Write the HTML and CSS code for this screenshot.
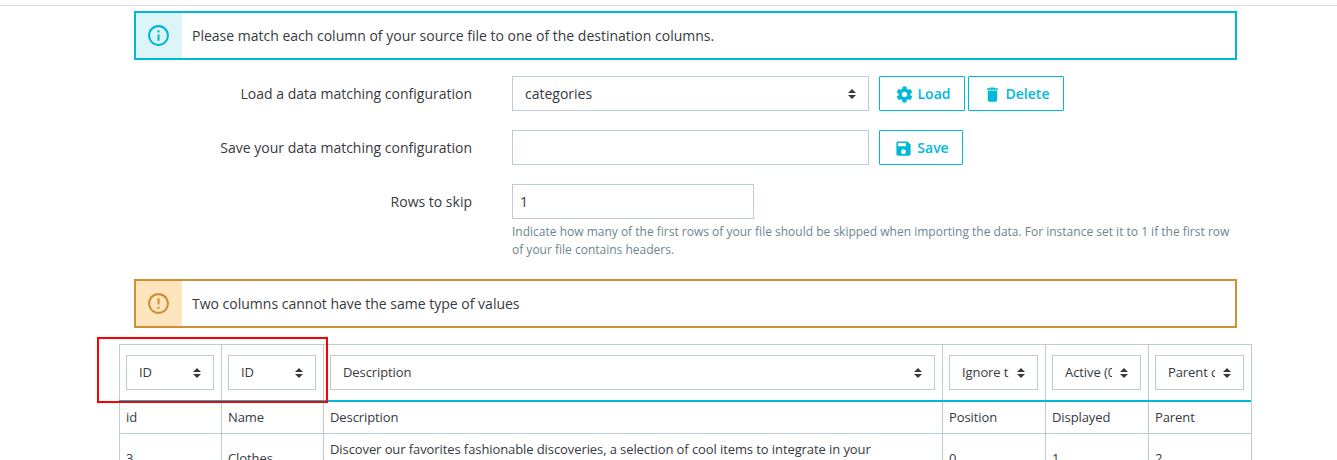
FILE: index.html
```html
<!DOCTYPE html>
<html lang="en">
<head>
<meta charset="utf-8">
<title>Import matching</title>
<link rel="stylesheet" href="styles.css">
</head>
<body>
<svg class="defs" width="0" height="0">
  <symbol id="sort" viewBox="0 0 8 10"><path d="M4 0L8 4H0zM0 6h8L4 10z"/></symbol>
</svg>
<main class="page">
  <div class="alert info">
    <div class="alert-icon"><svg viewBox="0 0 24 24"><path d="M11 17h2v-6h-2v6zm1-15C6.480 2 2 6.480 2 12s4.480 10 10 10 10-4.480 10-10S17.520 2 12 2zm0 18c-4.410 0-8-3.590-8-8s3.590-8 8-8 8 3.590 8 8-3.590 8-8 8zM11 9h2V7h-2v2z"/></svg></div>
    <p class="alert-text">Please match each column of your source file to one of the destination columns.</p>
  </div>
  <form class="form">
    <div class="row">
      <label class="label">Load a data matching configuration</label>
      <div class="select wide"><span class="value">categories</span><svg class="arrows"><use href="#sort"/></svg></div>
      <div class="actions">
        <button class="btn load" type="button"><svg viewBox="0 0 24 24"><path d="M19.430 12.980c.04-.32.070-.64.070-.98s-.03-.66-.07-.98l2.110-1.650c.19-.15.240-.42.120-.64l-2-3.460c-.12-.22-.39-.3-.61-.22l-2.490 1c-.52-.4-1.080-.73-1.690-.98l-.38-2.650C14.460 2.180 14.250 2 14 2h-4c-.25 0-.46.180-.49.420l-.38 2.650c-.61.250-1.170.59-1.690.98l-2.490-1c-.23-.09-.49 0-.61.220l-2 3.460c-.13.220-.07.49.120.64l2.110 1.650c-.04.320-.07.650-.07.980s.03.660.070.980l-2.110 1.650c-.19.150-.24.420-.12.640l2 3.460c.120.220.39.300.61.220l2.490-1c.52.400 1.080.730 1.690.980l.38 2.650c.03.240.240.420.490.420h4c.25 0 .46-.18.490-.42l.38-2.650c.61-.25 1.170-.59 1.690-.98l2.490 1c.230.090.490 0 .61-.22l2-3.460c.12-.22.070-.49-.12-.64l-2.110-1.650zM12 15.500c-1.930 0-3.500-1.570-3.500-3.500s1.570-3.500 3.500-3.500 3.500 1.570 3.500 3.500-1.570 3.500-3.500 3.500z"/></svg>Load</button>
        <button class="btn delete" type="button"><svg viewBox="0 0 24 24"><path d="M6 19c0 1.100.9 2 2 2h8c1.100 0 2-.9 2-2V7H6v12zM19 4h-3.500l-1-1h-5l-1 1H5v2h14V4z"/></svg>Delete</button>
      </div>
    </div>
    <div class="row">
      <label class="label">Save your data matching configuration</label>
      <div class="input wide"></div>
      <div class="actions">
        <button class="btn save" type="button"><svg viewBox="0 0 24 24"><path d="M17 3H5c-1.110 0-2 .9-2 2v14c0 1.100.89 2 2 2h14c1.100 0 2-.9 2-2V7l-4-4zm-5 16c-1.660 0-3-1.340-3-3s1.340-3 3-3 3 1.340 3 3-1.340 3-3 3zm3-10H5V5h10v4z"/></svg>Save</button>
      </div>
    </div>
    <div class="row">
      <label class="label">Rows to skip</label>
      <div class="input short">1</div>
    </div>
    <p class="help">Indicate how many of the first rows of your file should be skipped when importing the data. For instance set it to 1 if the first row<br>of your file contains headers.</p>
  </form>
  <div class="alert warning">
    <div class="alert-icon"><svg viewBox="0 0 24 24"><path d="M11 15h2v2h-2zm0-8h2v6h-2zm.99-5C6.470 2 2 6.480 2 12s4.470 10 9.990 10C17.520 22 22 17.520 22 12S17.520 2 11.990 2zM12 20c-4.420 0-8-3.580-8-8s3.580-8 8-8 8 3.580 8 8-3.580 8-8 8z"/></svg></div>
    <p class="alert-text">Two columns cannot have the same type of values</p>
  </div>
  <div class="table-wrap">
    <div class="table">
      <div class="tr head">
        <div class="td"><div class="select"><span class="value">ID</span><svg class="arrows"><use href="#sort"/></svg></div></div>
        <div class="td"><div class="select"><span class="value">ID</span><svg class="arrows"><use href="#sort"/></svg></div></div>
        <div class="td"><div class="select"><span class="value">Description</span><svg class="arrows"><use href="#sort"/></svg></div></div>
        <div class="td"><div class="select"><span class="value">Ignore this column</span><svg class="arrows"><use href="#sort"/></svg></div></div>
        <div class="td"><div class="select"><span class="value">Active (0/1)</span><svg class="arrows"><use href="#sort"/></svg></div></div>
        <div class="td"><div class="select"><span class="value">Parent category</span><svg class="arrows"><use href="#sort"/></svg></div></div>
      </div>
      <div class="tr names">
        <div class="td">id</div><div class="td">Name</div><div class="td">Description</div><div class="td">Position</div><div class="td">Displayed</div><div class="td">Parent</div>
      </div>
      <div class="tr data">
        <div class="td">3</div><div class="td">Clothes</div><div class="td top">Discover our favorites fashionable discoveries, a selection of cool items to integrate in your</div><div class="td">0</div><div class="td">1</div><div class="td">2</div>
      </div>
    </div>
    <div class="highlight"></div>
  </div>
</main>
</body>
</html>
```
FILE: styles.css
```css
* { box-sizing: border-box; }
body {
  margin: 0;
  height: 460px;
  overflow: hidden;
  background: #fff;
  color: #363a41;
  font: 14px/21px "Open Sans", "Noto Sans", sans-serif;
}
p { margin: 0; }
.defs { position: absolute; }
.page {
  height: 455px;
  overflow: hidden;
  margin-top: 5px;
  border-top: 1px solid #ddd;
  padding: 5px 100px 0 134px;
}
.alert {
  display: flex;
  width: 1103px;
  height: 49px;
  border: 2px solid;
}
.info { border-color: #00b9d7; }
.warning { border-color: #cd9035; }
.alert-icon {
  display: flex;
  align-items: center;
  justify-content: center;
  width: 46px;
  padding-right: 1px;
}
.alert-icon svg { width: 25px; height: 25px; }
.info .alert-icon { background: #ddf4f9; fill: #00b9d7; }
.warning .alert-icon { background: #ffe5bd; fill: #cd9035; }
.alert-text { padding: 12px 0 0 10px; }
.form {
  display: flex;
  flex-direction: column;
  gap: 19px;
  padding: 16px 0 20px;
}
.row { display: flex; height: 35px; }
.label {
  width: 338px;
  margin-right: 40px;
  padding-top: 7px;
  text-align: right;
}
.select, .input {
  display: flex;
  align-items: center;
  height: 35px;
  border: 1px solid #bbcdd2;
}
.wide { width: 357px; }
.short { width: 242px; padding-left: 7px; }
.select { padding: 0 12px; }
.value {
  flex: 1;
  min-width: 0;
  overflow: hidden;
  white-space: nowrap;
}
.arrows {
  flex: none;
  width: 8px;
  height: 10px;
  margin-left: 8px;
  fill: #363a41;
}
.actions { display: flex; gap: 3px; margin-left: 10px; }
.btn {
  display: flex;
  align-items: center;
  justify-content: center;
  gap: 4px;
  padding: 0;
  border: 1px solid #00b9d7;
  border-radius: 1px;
  background: #fff;
  color: #00b9d7;
  font: 600 14px/21px "Open Sans", "Noto Sans", sans-serif;
}
.btn svg { width: 19px; height: 19px; margin-top: 1px; fill: #00b9d7; }
.load { width: 86px; padding-left: 1px; }
.delete { width: 96px; }
.save { width: 84px; padding-left: 1px; }
.help {
  margin: -15px 0 0 378px;
  color: #6c868e;
  font-size: 12px;
  line-height: 18px;
  white-space: nowrap;
}
.table-wrap {
  position: relative;
  width: 1133px;
  margin: 16px 0 0 -15px;
}
.table {
  border: 1px solid #bbcdd2;
  border-left: 0;
  font-size: 13px;
  line-height: 19.5px;
  letter-spacing: -0.09px;
}
.tr { display: grid; grid-template-columns: 102px 102px 619px 103px 103px 103px; }
.td {
  display: flex;
  flex-direction: column;
  justify-content: center;
  padding: 0 7px 0 6px;
  border-left: 1px solid #bbcdd2;
}
.td.top { justify-content: flex-start; padding-top: 6px; }
.head { height: 57px; border-bottom: 2px solid #00b9d7; }
.names { height: 32px; border-bottom: 1px solid #bbcdd2; }
.data { height: 49px; }
.highlight {
  position: absolute;
  left: -22px;
  top: -7px;
  width: 231px;
  height: 66px;
  border: 2px solid #f00;
}
```
